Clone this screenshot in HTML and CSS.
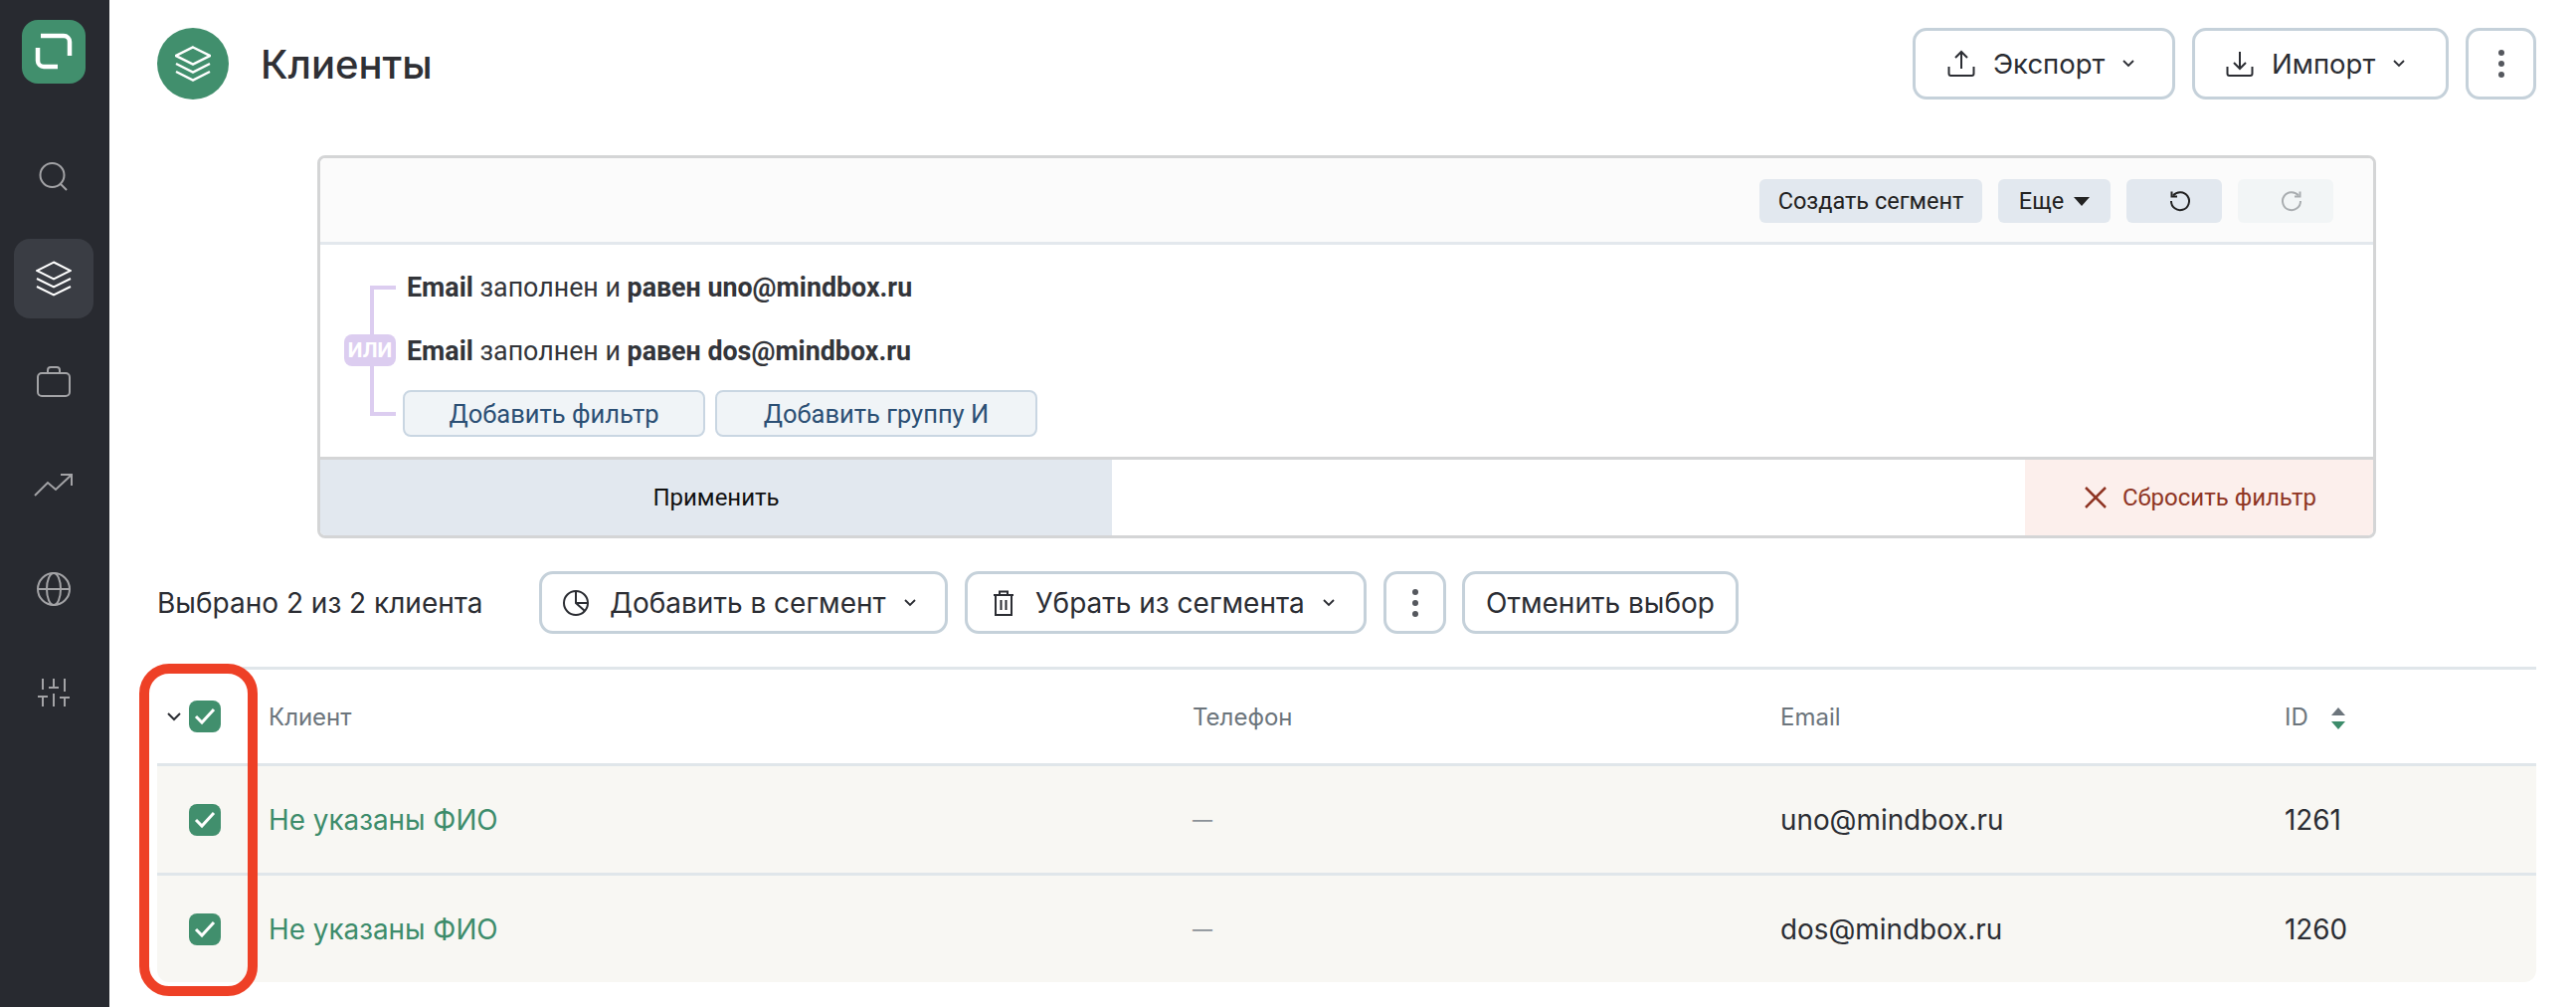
FILE: index.html
```html
<!DOCTYPE html>
<html lang="ru">
<head>
    <meta charset="UTF-8">
    <title>Клиенты</title>
    <link rel="stylesheet" href="styles.css">
</head>
<body>
    <aside class="sidebar">
        <div class="logo">
            <svg width="64" height="64" viewBox="0 0 64 64" fill="none" stroke="#fff" stroke-width="4.5">
                <path d="M19 16H42a6 6 0 0 1 6 6V36"/>
                <path d="M16 28V41a6 6 0 0 0 6 6H36"/>
            </svg>
        </div>
        <nav class="nav">
            <a class="nav-item nav-search">
                <svg width="40" height="40" viewBox="0 0 40 40" fill="none" stroke="#a3a3a6" stroke-width="2">
                    <circle cx="18.500" cy="18" r="12"/>
                    <path d="M27 27l6 6"/>
                </svg>
            </a>
            <a class="nav-item active">
                <svg width="36" height="36" viewBox="0 0 36 36" fill="none" stroke="#fff" stroke-width="2">
                    <path d="M18 1.500L35 10L18 18.500L1 10Z"/>
                    <path d="M1 18L18 26.500L35 18"/>
                    <path d="M1 26L18 34.500L35 26"/>
                </svg>
            </a>
            <a class="nav-item">
                <svg width="40" height="40" viewBox="0 0 40 40" fill="none" stroke="#a3a3a6" stroke-width="2">
                    <rect x="4" y="11" width="32" height="23" rx="4"/>
                    <path d="M14 11V8a3 3 0 0 1 3-3h6a3 3 0 0 1 3 3v3"/>
                </svg>
            </a>
            <a class="nav-item">
                <svg width="40" height="40" viewBox="0 0 40 40" fill="none" stroke="#a3a3a6" stroke-width="2">
                    <path d="M1 30L14 17L22 24L38 9"/>
                    <path d="M27 9H38V20"/>
                </svg>
            </a>
            <a class="nav-item">
                <svg width="40" height="40" viewBox="0 0 40 40" fill="none" stroke="#a3a3a6" stroke-width="2">
                    <circle cx="20" cy="20" r="16"/>
                    <ellipse cx="20" cy="20" rx="7" ry="16"/>
                    <path d="M4 20H36"/>
                </svg>
            </a>
            <a class="nav-item">
                <svg width="40" height="40" viewBox="0 0 40 40" fill="none" stroke="#a3a3a6" stroke-width="2">
                    <path d="M9 6V17M4 24H14M9 24V34"/>
                    <path d="M20 6V15M15 15H25M20 21V34"/>
                    <path d="M31 6V19M26 25H36M31 25V34"/>
                </svg>
            </a>
        </nav>
    </aside>

    <main class="main">
        <header class="page-header">
            <div class="page-icon">
                <svg width="36" height="36" viewBox="0 0 36 36" fill="none" stroke="#fff" stroke-width="2.500">
                    <path d="M18 1.500L35 10L18 18.500L1 10Z"/>
                    <path d="M1 18L18 26.500L35 18"/>
                    <path d="M1 26L18 34.500L35 26"/>
                </svg>
            </div>
            <h1>Клиенты</h1>
            <div class="header-actions">
                <button class="btn btn-export">
                    <svg class="btn-icon" width="28" height="28" viewBox="0 0 28 28" fill="none" stroke="#2b2d33" stroke-width="2">
                        <path d="M14 19V2M8 8l6-6 6 6"/>
                        <path d="M1.500 17v7a2 2 0 0 0 2 2h21a2 2 0 0 0 2-2v-7"/>
                    </svg>
                    Экспорт
                    <svg class="chevron" width="14" height="10" viewBox="0 0 14 10" fill="none" stroke="#2b2d33" stroke-width="1.800"><path d="M2 2l5 5 5-5"/></svg>
                </button>
                <button class="btn btn-import">
                    <svg class="btn-icon" width="28" height="28" viewBox="0 0 28 28" fill="none" stroke="#2b2d33" stroke-width="2">
                        <path d="M14 2V19M8 13l6 6 6-6"/>
                        <path d="M1.500 17v7a2 2 0 0 0 2 2h21a2 2 0 0 0 2-2v-7"/>
                    </svg>
                    Импорт
                    <svg class="chevron" width="14" height="10" viewBox="0 0 14 10" fill="none" stroke="#2b2d33" stroke-width="1.800"><path d="M2 2l5 5 5-5"/></svg>
                </button>
                <button class="btn btn-dots"><span class="dots"></span></button>
            </div>
        </header>

        <section class="filter-panel">
            <div class="filter-toolbar">
                <button class="tool-btn tool-create">Создать сегмент</button>
                <button class="tool-btn tool-more">Еще <span class="caret"></span></button>
                <button class="tool-btn tool-history">
                    <svg width="24" height="24" viewBox="0 0 24 24" fill="none" stroke="#222" stroke-width="2">
                        <path d="M5 6.500A9 9 0 1 1 3 12"/>
                        <path d="M3.500 2.500V7.500H9"/>
                    </svg>
                </button>
                <button class="tool-btn tool-history disabled">
                    <svg width="24" height="24" viewBox="0 0 24 24" fill="none" stroke="#a9adb0" stroke-width="2">
                        <path d="M19 6.500A9 9 0 1 0 21 12"/>
                        <path d="M20.500 2.500V7.500H15"/>
                    </svg>
                </button>
            </div>
            <div class="filter-body">
                <div class="or-rail"><span class="or-badge">ИЛИ</span></div>
                <div class="filter-rows">
                    <div class="filter-row"><b>Email</b> заполнен и <b>равен uno@mindbox.ru</b></div>
                    <div class="filter-row"><b>Email</b> заполнен и <b>равен dos@mindbox.ru</b></div>
                    <div class="filter-add">
                        <button class="add-btn add-filter">Добавить фильтр</button>
                        <button class="add-btn add-group">Добавить группу И</button>
                    </div>
                </div>
            </div>
            <div class="filter-footer">
                <button class="apply-btn">Применить</button>
                <button class="reset-btn">
                    <svg width="24" height="24" viewBox="0 0 24 24" fill="none" stroke="#8f3524" stroke-width="2.500"><path d="M2 2l20 20M22 2L2 22"/></svg>
                    Сбросить фильтр
                </button>
            </div>
        </section>

        <div class="selection-bar">
            <span class="selection-count">Выбрано 2 из 2 клиента</span>
            <button class="btn btn-sm btn-add">
                <svg class="btn-icon" width="28" height="28" viewBox="0 0 28 28" fill="none" stroke="#2b2d33" stroke-width="2">
                    <circle cx="14" cy="14" r="12"/>
                    <path d="M14 2V14L23 22M14 14H26"/>
                </svg>
                Добавить в сегмент
                <svg class="chevron" width="14" height="10" viewBox="0 0 14 10" fill="none" stroke="#2b2d33" stroke-width="1.800"><path d="M2 2l5 5 5-5"/></svg>
            </button>
            <button class="btn btn-sm btn-remove">
                <svg class="btn-icon" width="28" height="28" viewBox="0 0 28 28" fill="none" stroke="#2b2d33" stroke-width="2">
                    <path d="M4 6H24M10 6V2.500H18V6"/>
                    <path d="M6 6V26H22V6"/>
                    <path d="M11.500 11V21M16.500 11V21"/>
                </svg>
                Убрать из сегмента
                <svg class="chevron" width="14" height="10" viewBox="0 0 14 10" fill="none" stroke="#2b2d33" stroke-width="1.800"><path d="M2 2l5 5 5-5"/></svg>
            </button>
            <button class="btn btn-sm btn-dots-sm"><span class="dots"></span></button>
            <button class="btn btn-sm btn-cancel">Отменить выбор</button>
        </div>

        <div class="table-wrap">
            <table class="clients">
                <thead>
                    <tr>
                        <th class="col-check">
                            <div class="check-cell">
                                <svg class="head-chevron" width="16" height="10" viewBox="0 0 16 10" fill="none" stroke="#2b2d33" stroke-width="2"><path d="M2 2l6 6 6-6"/></svg>
                                <span class="checkbox"><svg width="22" height="18" viewBox="0 0 22 18" fill="none" stroke="#fff" stroke-width="3"><path d="M2 9l6 6L20 2"/></svg></span>
                            </div>
                        </th>
                        <th class="col-name">Клиент</th>
                        <th class="col-phone">Телефон</th>
                        <th class="col-email">Email</th>
                        <th class="col-id">ID <span class="sort"><i class="sort-up"></i><i class="sort-down"></i></span></th>
                    </tr>
                </thead>
                <tbody>
                    <tr>
                        <td>
                            <div class="check-cell">
                                <span class="checkbox"><svg width="22" height="18" viewBox="0 0 22 18" fill="none" stroke="#fff" stroke-width="3"><path d="M2 9l6 6L20 2"/></svg></span>
                            </div>
                        </td>
                        <td><a class="client-link">Не указаны ФИО</a></td>
                        <td class="empty">—</td>
                        <td>uno@mindbox.ru</td>
                        <td>1261</td>
                    </tr>
                    <tr>
                        <td>
                            <div class="check-cell">
                                <span class="checkbox"><svg width="22" height="18" viewBox="0 0 22 18" fill="none" stroke="#fff" stroke-width="3"><path d="M2 9l6 6L20 2"/></svg></span>
                            </div>
                        </td>
                        <td><a class="client-link">Не указаны ФИО</a></td>
                        <td class="empty">—</td>
                        <td>dos@mindbox.ru</td>
                        <td>1260</td>
                    </tr>
                </tbody>
            </table>
            <div class="highlight"></div>
        </div>
    </main>
</body>
</html>
```

FILE: styles.css
```css
* {
    box-sizing: border-box;
}
html, body {
    height: 100%;
}
body {
    margin: 0;
    display: flex;
    overflow: hidden;
    background: #fff;
    color: #2b2d33;
    font-family: Inter, "Noto Sans", sans-serif;
}
button {
    font-family: inherit;
    cursor: pointer;
}

/* sidebar */
.sidebar {
    width: 110px;
    flex: none;
    background: #282a30;
    display: flex;
    flex-direction: column;
    align-items: center;
    padding: 20px 2px 0 0;
}
.logo {
    width: 64px;
    height: 64px;
    border-radius: 16px;
    background: #418f6d;
}
.logo svg, .nav-item svg, .page-icon svg {
    display: block;
}
.nav {
    margin-top: 52px;
    display: flex;
    flex-direction: column;
    gap: 24px;
}
.nav-item {
    width: 80px;
    height: 80px;
    border-radius: 16px;
    display: flex;
    align-items: center;
    justify-content: center;
}
.nav-search {
    padding-top: 4px;
}
.nav-item.active {
    background: #3a3d44;
}

/* header */
.main {
    flex: 1;
    min-width: 0;
    padding: 28px 40px 0 48px;
}
.page-header {
    display: flex;
    align-items: center;
    height: 72px;
}
.page-icon {
    width: 72px;
    height: 72px;
    border-radius: 50%;
    background: #418f6d;
    display: flex;
    align-items: center;
    justify-content: center;
}
h1 {
    margin: 0 0 0 32px;
    font-size: 40px;
    font-weight: 500;
    color: #2f3035;
}
.header-actions {
    margin-left: auto;
    display: flex;
    gap: 17px;
}
.btn {
    height: 72px;
    border: 3px solid #c5d1da;
    border-radius: 14px;
    background: #fff;
    color: #2b2d33;
    font-size: 27.500px;
    display: inline-flex;
    align-items: center;
    justify-content: flex-start;
    padding: 0 0 0 32px;
}
.btn-icon {
    margin-right: 18px;
}
.chevron {
    margin-left: 17px;
}
.btn-export {
    width: 264px;
}
.btn-import {
    width: 258px;
    padding-left: 31px;
}
.btn-dots {
    width: 71px;
    justify-content: center;
    padding: 0;
}
.dots {
    display: block;
    width: 6px;
    height: 6px;
    border-radius: 50%;
    background: #55585e;
    box-shadow: 0 -11px 0 #55585e, 0 11px 0 #55585e;
}

/* filter */
.filter-panel {
    margin: 56px 161px 0;
    height: 385px;
    border: 3px solid #d4d5d6;
    border-radius: 8px;
    font-family: Roboto, "Noto Sans", sans-serif;
    display: flex;
    flex-direction: column;
    overflow: hidden;
}
.filter-toolbar {
    height: 87px;
    background: #fbfbfb;
    border-bottom: 3px solid #e3e8ed;
    display: flex;
    align-items: center;
    justify-content: flex-end;
    gap: 16px;
    padding: 2px 40px 0 0;
    flex: none;
}
.tool-btn {
    height: 44px;
    border: 0;
    border-radius: 6px;
    background: #e2e8ef;
    color: #222;
    font-family: inherit;
    font-size: 23.500px;
    padding: 0;
    display: flex;
    align-items: center;
    justify-content: center;
}
.tool-create {
    width: 224px;
}
.tool-more {
    width: 113px;
    gap: 10px;
}
.tool-history {
    width: 96px;
    padding-left: 12px;
}
.tool-history.disabled {
    background: #f2f5f6;
}
.caret {
    width: 0;
    height: 0;
    border-left: 8px solid transparent;
    border-right: 8px solid transparent;
    border-top: 9px solid #222;
}
.filter-body {
    flex: 1;
    display: flex;
    padding: 41px 0 0 24px;
}
.or-rail {
    position: relative;
    width: 26px;
    height: 131px;
    margin-left: 26px;
    border: 4px solid #dccdf0;
    border-right: 0;
    flex: none;
}
.or-badge {
    position: absolute;
    left: -30px;
    top: 45px;
    width: 52px;
    height: 32px;
    border-radius: 8px;
    background: #dccdf0;
    color: #fff;
    font-size: 21px;
    font-weight: 700;
    line-height: 32px;
    text-align: center;
}
.filter-rows {
    margin-left: 7px;
    margin-top: -17px;
    display: flex;
    flex-direction: column;
}
.filter-row {
    font-size: 26.800px;
    line-height: 38px;
    height: 38px;
    margin-left: 4px;
    color: #33353a;
}
.filter-row + .filter-row {
    margin-top: 26px;
}
.filter-add {
    display: flex;
    gap: 10px;
    margin-top: 20px;
}
.add-btn {
    height: 47px;
    border: 2px solid #c9d6e2;
    border-radius: 8px;
    background: #f0f4f7;
    color: #2b4f74;
    font-family: inherit;
    font-size: 25.500px;
    padding: 0;
}
.add-filter {
    width: 304px;
}
.add-group {
    width: 324px;
}
.filter-footer {
    height: 79px;
    flex: none;
    border-top: 3px solid #d4d5d6;
    display: flex;
    justify-content: space-between;
}
.apply-btn, .reset-btn {
    border: 0;
    font-family: inherit;
    font-size: 24px;
    padding: 0;
    display: flex;
    align-items: center;
    justify-content: center;
}
.apply-btn {
    width: 796px;
    background: #e2e8ef;
    color: #111;
}
.reset-btn {
    width: 350px;
    padding-left: 2px;
    background: #fcefec;
    color: #8f3524;
    gap: 15px;
}

/* selection */
.selection-bar {
    margin-top: 33px;
    display: flex;
    align-items: center;
}
.selection-count {
    font-size: 28px;
    width: 384px;
}
.btn-sm {
    height: 63px;
    font-size: 28px;
}
.btn-add {
    width: 411px;
    padding-left: 20px;
}
.btn-add .btn-icon {
    margin-right: 20px;
}
.btn-remove {
    width: 404px;
    margin-left: 17px;
    padding-left: 22px;
}
.btn-dots-sm {
    width: 63px;
    margin-left: 17px;
    justify-content: center;
    padding: 0;
}
.btn-cancel {
    width: 278px;
    margin-left: 16px;
    justify-content: center;
    padding: 0;
}

/* table */
.table-wrap {
    position: relative;
    margin-top: 33px;
}
.clients {
    width: 100%;
    table-layout: fixed;
    border-collapse: separate;
    border-spacing: 0;
}
.clients th {
    height: 97px;
    font-size: 24px;
    font-weight: 400;
    color: #6c757c;
    text-align: left;
    padding: 0;
    border-top: 3px solid #e0e6ea;
}
.clients td {
    height: 110px;
    padding: 0;
    font-size: 27.850px;
    background: #f8f7f3;
    border-top: 3px solid #e0e6ea;
}
.clients tr:last-child td:first-child {
    border-bottom-left-radius: 12px;
}
.clients tr:last-child td:last-child {
    border-bottom-right-radius: 12px;
}
.col-check {
    width: 112px;
}
.col-name {
    width: 929px;
}
.col-phone {
    width: 591px;
}
.col-email {
    width: 507px;
}
.check-cell {
    position: relative;
    padding-left: 32px;
    height: 32px;
}
.head-chevron {
    position: absolute;
    left: 9px;
    top: 11px;
}
.checkbox {
    width: 32px;
    height: 32px;
    border-radius: 8px;
    background: #418f6d;
    display: flex;
    align-items: center;
    justify-content: center;
}
.client-link {
    color: #3d8c6b;
}
.clients td.empty {
    color: #8b9197;
    font-size: 20px;
}
.sort {
    display: inline-flex;
    flex-direction: column;
    gap: 6px;
    margin-left: 16px;
    vertical-align: middle;
}
.sort i {
    width: 0;
    height: 0;
    border-left: 7px solid transparent;
    border-right: 7px solid transparent;
}
.sort-up {
    border-bottom: 8px solid #6c757c;
}
.sort-down {
    border-top: 8px solid #3d8c6b;
}
.highlight {
    position: absolute;
    left: -18px;
    top: -3px;
    width: 119px;
    height: 334px;
    border: 10px solid #ee4026;
    border-radius: 30px;
}
```
